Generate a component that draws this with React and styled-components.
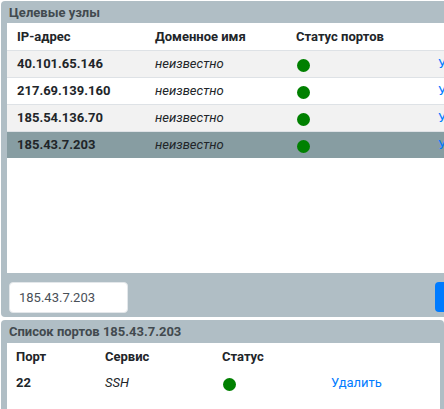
import React from 'react'
import styled, { createGlobalStyle } from 'styled-components'

const GlobalStyle = createGlobalStyle`
  body {
    margin: 0;
    background: #fff;
    overflow: hidden;
    font-family: Roboto, "Liberation Sans", Arial, sans-serif;
    color: #212529;
  }
`

const Page = styled.div`
  width: 444px;
  height: 409px;
  overflow: hidden;
  padding: 1px 0 0 1px;
  box-sizing: border-box;
  display: flex;
  flex-direction: column;
  gap: 3px;
`

const Panel = styled.section`
  flex: none;
  width: ${p => p.$width}px;
  height: ${p => p.$height}px;
  background: #b0bec5;
  border-radius: 4px;
  padding: 0 ${p => p.$padRight || 0}px 0 6px;
  box-sizing: border-box;
  display: flex;
  flex-direction: column;
`

const PanelTitle = styled.h3`
  margin: 0;
  height: ${p => p.$height}px;
  line-height: ${p => p.$height + 1}px;
  padding-left: 2px;
  font-size: 13px;
  font-weight: 700;
  color: #424a4f;
`

const TableArea = styled.div`
  flex: 1;
  background: #fff;
  overflow: hidden;
`

const Table = styled.table`
  width: ${p => p.$width}px;
  border-collapse: collapse;
  table-layout: fixed;
  font-size: 13px;
`

const HeadCell = styled.th`
  box-sizing: border-box;
  width: ${p => p.$w}px;
  height: ${p => p.$h}px;
  padding: 0 0 0 ${p => p.$pad}px;
  text-align: left;
  font-weight: 700;
  color: #212529;
  white-space: nowrap;
`

const Row = styled.tr`
  background: ${p => (p.$selected ? '#879da2' : p.$striped ? '#f2f2f2' : '#fff')};
  border-top: ${p => (p.$lined ? '1px solid #dee2e6' : 'none')};
`

const Cell = styled.td`
  box-sizing: border-box;
  height: ${p => p.$h}px;
  padding: 0 0 0 ${p => p.$pad}px;
  white-space: nowrap;
  overflow: hidden;
  font-weight: ${p => (p.$bold ? 700 : 400)};
  font-style: ${p => (p.$italic ? 'italic' : 'normal')};
  color: #212529;
`

const Dot = styled.span`
  display: inline-block;
  width: 13px;
  height: 13px;
  border-radius: 50%;
  background: #008000;
  vertical-align: middle;
  margin-top: 2px;
  margin-left: 1px;
`

const Link = styled.a`
  color: #007bff;
  text-decoration: none;
  cursor: pointer;
`

const Footer = styled.div`
  height: 44px;
  padding-top: 9px;
  box-sizing: border-box;
  display: flex;
  align-items: flex-start;
  gap: 307px;
  margin-left: 2px;
`

const Input = styled.input`
  width: 119px;
  height: 31px;
  box-sizing: border-box;
  border: 1px solid #e3e7ea;
  border-radius: 4px;
  padding: 0 9px;
  font-family: inherit;
  font-size: 13px;
  color: #495057;
  background: #fff;
  outline: none;
`

const Button = styled.button`
  height: 30px;
  padding: 0 12px;
  border: none;
  border-radius: 4px;
  background: #007bff;
  color: #fff;
  font-family: inherit;
  font-size: 13px;
  white-space: nowrap;
`

const hosts = [
  { ip: '40.101.65.146' },
  { ip: '217.69.139.160' },
  { ip: '185.54.136.70' },
  { ip: '185.43.7.203', selected: true },
]

export default function App() {
  return (
    <>
      <GlobalStyle />
      <Page>
        <Panel $width={620} $height={316}>
          <PanelTitle $height={22}>Целевые узлы</PanelTitle>
          <TableArea>
            <Table $width={571}>
              <thead>
                <tr>
                  <HeadCell $w={138} $h={27} $pad={10}>IP-адрес</HeadCell>
                  <HeadCell $w={141} $h={27} $pad={10}>Доменное имя</HeadCell>
                  <HeadCell $w={142} $h={27} $pad={10}>Статус портов</HeadCell>
                  <HeadCell $w={150} $h={27} $pad={10}></HeadCell>
                </tr>
              </thead>
              <tbody>
                {hosts.map((h, i) => (
                  <Row key={h.ip} $lined $striped={i % 2 === 0} $selected={h.selected}>
                    <Cell $h={27} $pad={10} $bold>{h.ip}</Cell>
                    <Cell $h={27} $pad={10} $italic>неизвестно</Cell>
                    <Cell $h={27} $pad={10}><Dot /></Cell>
                    <Cell $h={27} $pad={10}><Link>Удалить</Link></Cell>
                  </Row>
                ))}
              </tbody>
            </Table>
          </TableArea>
          <Footer>
            <Input defaultValue="185.43.7.203" />
            <Button>Добавить</Button>
          </Footer>
        </Panel>
        <Panel $width={443} $height={120} $padRight={4}>
          <PanelTitle $height={23}>Список портов 185.43.7.203</PanelTitle>
          <TableArea>
            <Table $width={433}>
              <thead>
                <tr>
                  <HeadCell $w={89} $h={26} $pad={9}>Порт</HeadCell>
                  <HeadCell $w={117} $h={26} $pad={9}>Сервис</HeadCell>
                  <HeadCell $w={109} $h={26} $pad={9}>Статус</HeadCell>
                  <HeadCell $w={118} $h={26} $pad={9}></HeadCell>
                </tr>
              </thead>
              <tbody>
                <Row>
                  <Cell $h={27} $pad={9} $bold>22</Cell>
                  <Cell $h={27} $pad={9} $italic>SSH</Cell>
                  <Cell $h={27} $pad={9}><Dot /></Cell>
                  <Cell $h={27} $pad={9}><Link>Удалить</Link></Cell>
                </Row>
              </tbody>
            </Table>
          </TableArea>
        </Panel>
      </Page>
    </>
  )
}
